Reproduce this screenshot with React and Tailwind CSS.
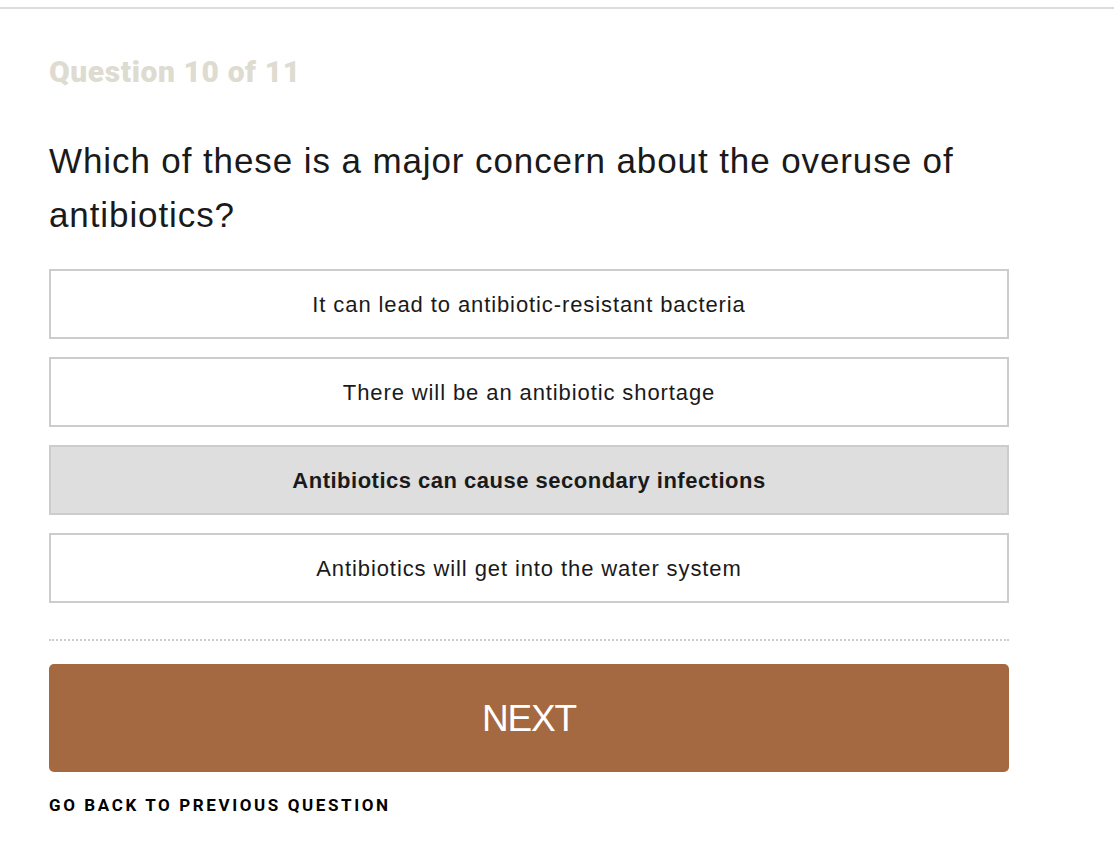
import React from "react";

const options = [
  "It can lead to antibiotic-resistant bacteria",
  "There will be an antibiotic shortage",
  "Antibiotics can cause secondary infections",
  "Antibiotics will get into the water system",
];

export default function App() {
  const selected = 2;
  return (
    <div className="min-h-screen bg-white font-['Liberation_Sans',Arial,sans-serif] text-[#1a1a1a]">
      {/* top rule */}
      <div className="pt-[7px]">
        <div className="h-[2px] bg-[#dddddd]" />
      </div>

      <div className="w-[960px] ml-[49px]">
        <h3 className="mt-[47px] text-[30px] leading-[32px] font-black text-[#dedbd0] font-['Roboto',sans-serif] tracking-[0.6px]">
          Question 10 of 11
        </h3>

        <h2 className="mt-[46px] text-[35px] leading-[54px] text-[#1a1a1a] w-[940px] tracking-[0.9px]">
          Which of these is a major concern about the overuse of antibiotics?
        </h2>

        {/* answers */}
        <div className="mt-[27px] flex flex-col gap-[18px]">
          {options.map((o, i) => (
            <button
              key={o}
              className={
                i === selected
                  ? "h-[70px] border-2 border-[#cccccc] bg-[#dedede] text-[22px] font-bold tracking-[0.5px] text-[#1a1a1a]"
                  : "h-[70px] border-2 border-[#cccccc] bg-white text-[22px] tracking-[0.9px] text-[#1a1a1a]"
              }
            >
              {o}
            </button>
          ))}
        </div>

        <div className="mt-[36px] border-t-2 border-dotted border-[#cccccc]" />

        <button className="mt-[23px] w-full h-[108px] rounded-[5px] bg-[#a56941] text-white text-[37px] leading-none tracking-[-1.2px]">
          NEXT
        </button>

        <div className="mt-[23px] text-[17px] leading-[20px] font-bold tracking-[2.6px] text-black font-['Roboto',sans-serif]">
          GO BACK TO PREVIOUS QUESTION
        </div>
      </div>
    </div>
  );
}
